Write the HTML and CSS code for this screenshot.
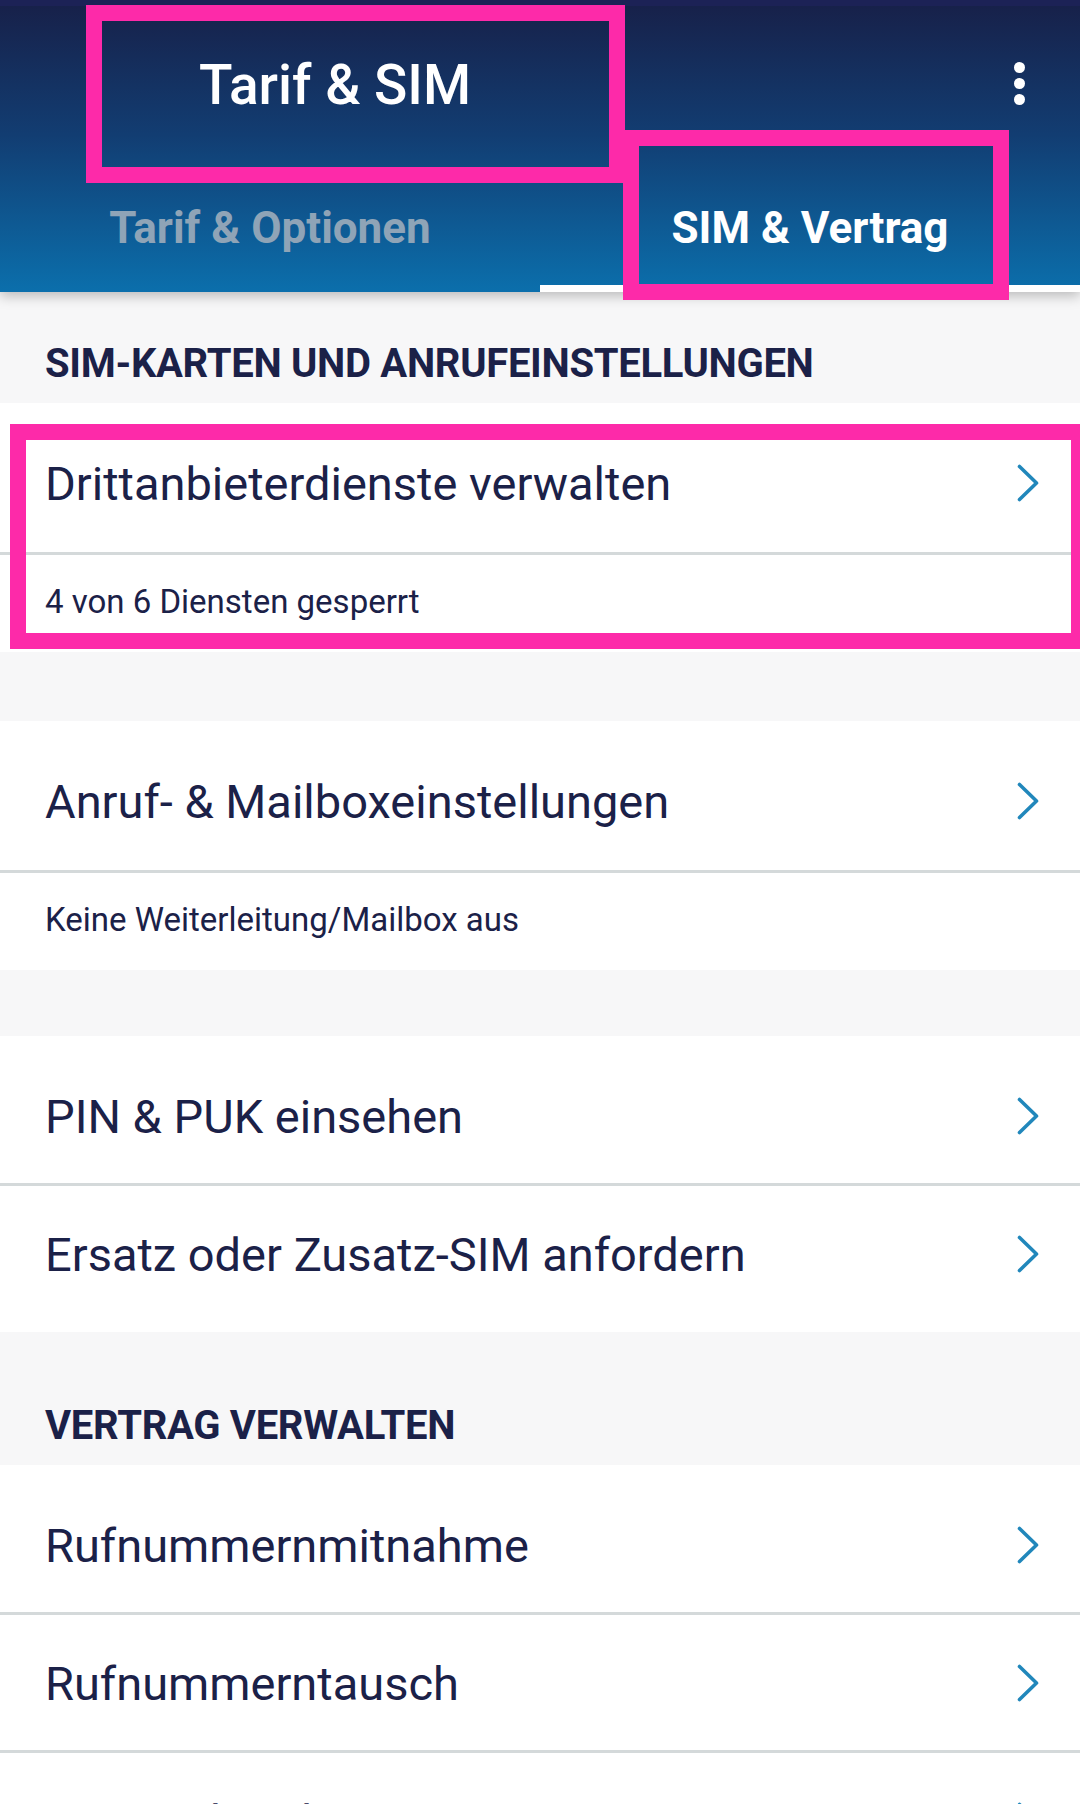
FILE: index.html
```html
<!DOCTYPE html>
<html lang="de">
<head>
    <meta charset="UTF-8" />
    <meta name="viewport" content="width=device-width, initial-scale=1.0" />
    <title>Tarif &amp; SIM</title>
    <link rel="stylesheet" href="styles.css">
</head>
<body>
    <div class="screen">
        <header class="appbar">
            <div class="toolbar">
                <h1 class="title">Tarif &amp; SIM</h1>
                <button class="menu-btn" aria-label="Menü">
                    <span class="dot"></span>
                    <span class="dot"></span>
                    <span class="dot"></span>
                </button>
            </div>
            <nav class="tabs">
                <a class="tab">Tarif &amp; Optionen</a>
                <a class="tab active">SIM &amp; Vertrag</a>
            </nav>
        </header>

        <main class="content">
            <h2 class="section-title first">SIM-Karten und Anrufeinstellungen</h2>

            <div class="card">
                <div class="row">
                    <span class="row-label">Drittanbieterdienste verwalten</span>
                    <svg class="chevron" viewBox="0 0 22 38"><path d="M2.5 2.5 L19.5 19 L2.5 35.5" /></svg>
                </div>
                <div class="row-info">4 von 6 Diensten gesperrt</div>
            </div>

            <div class="spacer"></div>

            <div class="card">
                <div class="row">
                    <span class="row-label">Anruf- &amp; Mailboxeinstellungen</span>
                    <svg class="chevron" viewBox="0 0 22 38"><path d="M2.5 2.5 L19.5 19 L2.5 35.5" /></svg>
                </div>
                <div class="row-info">Keine Weiterleitung/Mailbox aus</div>
            </div>

            <div class="spacer small"></div>

            <div class="card">
                <div class="row simple">
                    <span class="row-label">PIN &amp; PUK einsehen</span>
                    <svg class="chevron" viewBox="0 0 22 38"><path d="M2.5 2.5 L19.5 19 L2.5 35.5" /></svg>
                </div>
                <div class="row simple tight">
                    <span class="row-label">Ersatz oder Zusatz-SIM anfordern</span>
                    <svg class="chevron" viewBox="0 0 22 38"><path d="M2.5 2.5 L19.5 19 L2.5 35.5" /></svg>
                </div>
            </div>

            <h2 class="section-title">Vertrag verwalten</h2>

            <div class="card">
                <div class="row simple">
                    <span class="row-label">Rufnummernmitnahme</span>
                    <svg class="chevron" viewBox="0 0 22 38"><path d="M2.5 2.5 L19.5 19 L2.5 35.5" /></svg>
                </div>
                <div class="row simple tight short">
                    <span class="row-label">Rufnummerntausch</span>
                    <svg class="chevron" viewBox="0 0 22 38"><path d="M2.5 2.5 L19.5 19 L2.5 35.5" /></svg>
                </div>
                <div class="row simple tight">
                    <span class="row-label">Vertrag kündigen</span>
                    <svg class="chevron" viewBox="0 0 22 38"><path d="M2.5 2.5 L19.5 19 L2.5 35.5" /></svg>
                </div>
            </div>
        </main>

        <!-- highlight boxes drawn over the screenshot -->
        <div class="mark mark-title"></div>
        <div class="mark mark-tab"></div>
        <div class="mark mark-row"></div>
    </div>
</body>
</html>
```

FILE: styles.css
```css
* {
    margin: 0;
    padding: 0;
    box-sizing: border-box;
}

body {
    width: 1080px;
    height: 1804px;
    overflow: hidden;
    background: #f7f7f8;
    font-family: Roboto, "Noto Sans", sans-serif;
    color: #1b2148;
}

.screen {
    position: relative;
    width: 1080px;
    height: 1804px;
    overflow: hidden;
}

/* App bar */
.appbar {
    background: linear-gradient(to bottom, #17214a 0%, #123d72 45%, #0b6fac 100%);
    border-top: 6px solid #1c2256;
    box-shadow: 0 4px 12px rgba(0, 0, 0, 0.25);
    position: relative;
    z-index: 1;
}

.toolbar {
    height: 164px;
    display: flex;
    align-items: center;
    justify-content: space-between;
    padding: 0 55px 6px 199px;
}

.title {
    color: #ffffff;
    font-size: 55px;
    font-weight: 500;
}

.menu-btn {
    border: none;
    background: none;
    display: flex;
    flex-direction: column;
    gap: 5px;
    margin-top: -4px;
}

.dot {
    display: block;
    width: 11px;
    height: 11px;
    border-radius: 50%;
    background: #ffffff;
}

.tabs {
    display: flex;
    height: 122px;
}

.tab {
    flex: 1;
    display: flex;
    align-items: center;
    justify-content: center;
    font-size: 44px;
    font-weight: 700;
    color: #8fa4b7;
    border-bottom: 7px solid transparent;
}

.tab.active {
    color: #ffffff;
    border-bottom-color: #ffffff;
}

/* Lists */
.section-title {
    font-size: 40px;
    font-weight: 700;
    text-transform: uppercase;
    letter-spacing: -0.3px;
    line-height: 1;
    padding: 74px 45px 19px;
    color: #1b2148;
}

.section-title.first {
    padding-top: 52px;
}

.card {
    background: #ffffff;
}

.spacer {
    height: 69px;
}

.spacer.small {
    height: 66px;
}

.row {
    height: 152px;
    display: flex;
    align-items: flex-start;
    justify-content: space-between;
    padding: 53px 41px 0 45px;
    border-bottom: 3px solid #d4d9da;
}

.row.simple {
    height: 150px;
}

.row.tight {
    padding-top: 41px;
}

.row.short {
    height: 138px;
}

.card .row:last-child {
    border-bottom: none;
    height: 146px;
}

.row-label {
    font-size: 47px;
    font-weight: 400;
    color: #1b2148;
}

.row-info {
    height: 97px;
    display: flex;
    align-items: center;
    padding: 0 45px 4px;
    font-size: 33px;
    color: #1b2148;
}

.chevron {
    width: 22px;
    height: 38px;
    margin-top: 8px;
    flex-shrink: 0;
}

.chevron path {
    fill: none;
    stroke: #2187bb;
    stroke-width: 3.6;
    stroke-linecap: round;
    stroke-linejoin: round;
}

/* Pink highlight frames */
.mark {
    position: absolute;
    border: 16px solid #fd2aa9;
    z-index: 2;
}

.mark-title {
    left: 86px;
    top: 5px;
    width: 539px;
    height: 178px;
}

.mark-tab {
    left: 623px;
    top: 130px;
    width: 386px;
    height: 170px;
}

.mark-row {
    left: 10px;
    top: 424px;
    width: 1077px;
    height: 225px;
}
```
